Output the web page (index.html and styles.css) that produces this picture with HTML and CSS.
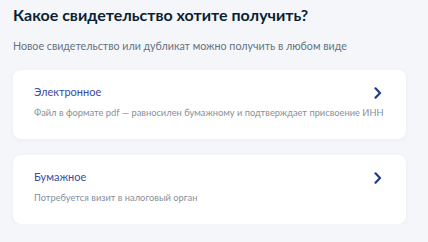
FILE: index.html
```html
<!DOCTYPE html>
<html lang="ru">
<head>
<meta charset="utf-8">
<link rel="stylesheet" href="styles.css">
</head>
<body>
<main class="page">
  <h1 class="title">Какое свидетельство хотите получить?</h1>
  <p class="lead">Новое свидетельство или дубликат можно получить в любом виде</p>
  <div class="options">
    <a class="card" href="#">
      <div class="card-text">
        <div class="card-title">Электронное</div>
        <div class="card-desc">Файл в формате pdf — равносилен бумажному и подтверждает присвоение ИНН</div>
      </div>
      <svg class="chevron" width="8" height="12" viewBox="0 0 8 12"><path d="M1.5 1.3 L6 6 L1.5 10.7" fill="none" stroke="currentColor" stroke-width="2.2" stroke-linecap="round" stroke-linejoin="round"/></svg>
    </a>
    <a class="card" href="#">
      <div class="card-text">
        <div class="card-title">Бумажное</div>
        <div class="card-desc">Потребуется визит в налоговый орган</div>
      </div>
      <svg class="chevron" width="8" height="12" viewBox="0 0 8 12"><path d="M1.5 1.3 L6 6 L1.5 10.7" fill="none" stroke="currentColor" stroke-width="2.2" stroke-linecap="round" stroke-linejoin="round"/></svg>
    </a>
  </div>
</main>
</body>
</html>
```
FILE: styles.css
```css
html, body {
  margin: 0;
  padding: 0;
  background: #f4f6fa;
}
body {
  font-family: Lato, "Noto Sans", sans-serif;
  color: #0b1f33;
}
.page {
  width: 393px;
  padding: 5px 0 0 13px;
}
.title {
  margin: 0;
  font-size: 16px;
  line-height: 20px;
  font-weight: 700;
  color: #0b1f33;
}
.lead {
  margin: 13px 0 0;
  font-size: 10.7px;
  line-height: 16px;
  color: #66727f;
}
.options {
  margin-top: 16px;
  display: flex;
  flex-direction: column;
  gap: 16px;
}
.card {
  display: flex;
  align-items: flex-start;
  justify-content: space-between;
  height: 69px;
  box-sizing: border-box;
  padding: 14px 24px 0 21px;
  background: #ffffff;
  border-radius: 8px;
  box-shadow: 0 1px 4px rgba(30, 60, 110, 0.06);
  text-decoration: none;
}
.card-text {
  flex: 1;
  min-width: 0;
  white-space: nowrap;
}
.card-title {
  font-size: 11px;
  line-height: 16px;
  color: #3b4ba3;
}
.card-desc {
  margin-top: 6px;
  font-size: 9.3px;
  line-height: 14px;
  color: #86909c;
}
.chevron {
  margin-top: 3px;
  color: #24398f;
  flex: none;
}
```
